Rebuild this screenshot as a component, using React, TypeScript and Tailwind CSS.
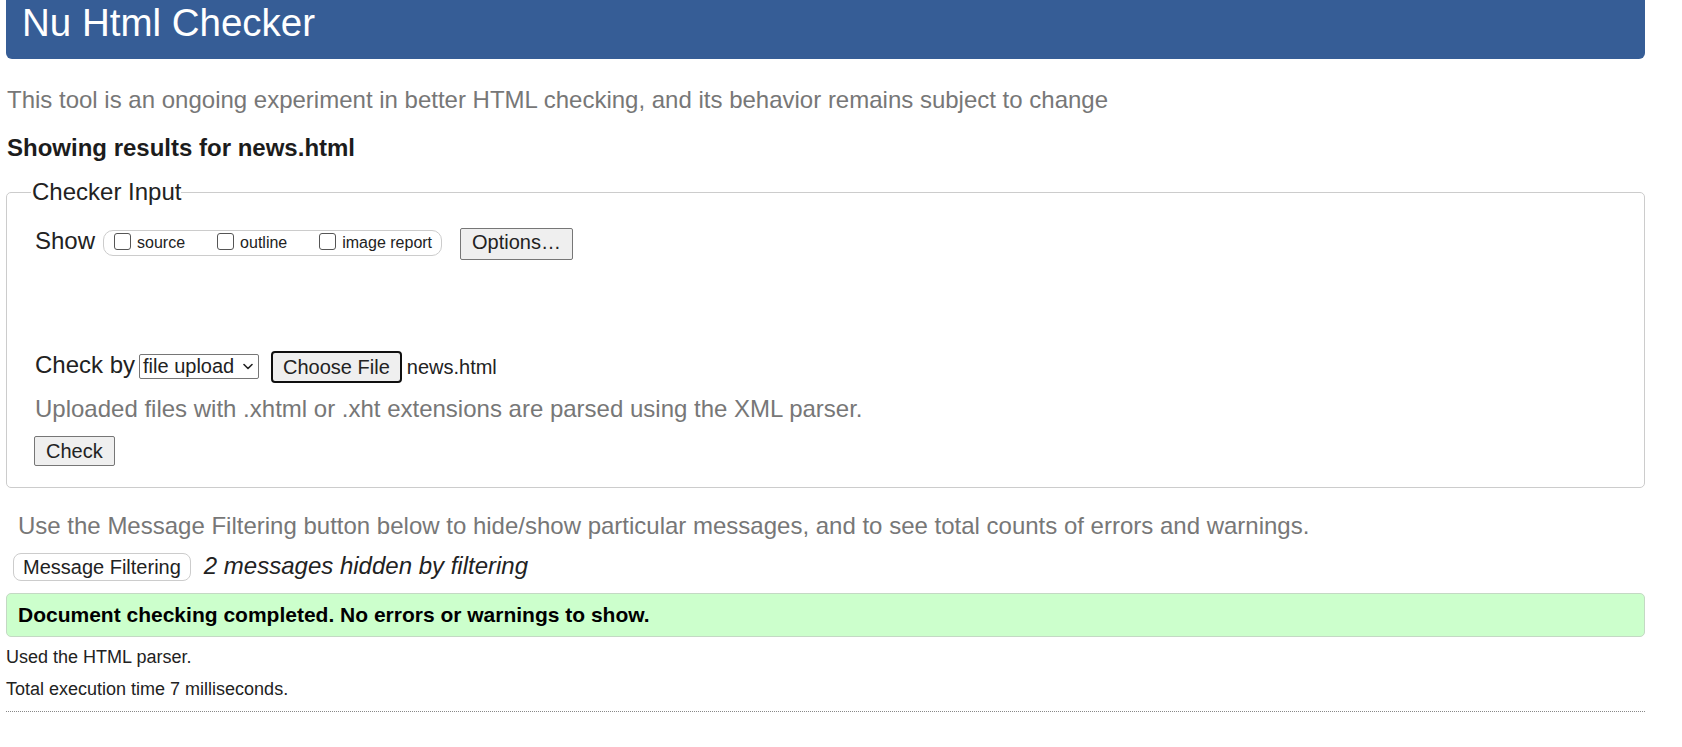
import React from "react";

function Checkbox({ label, first }: { label: string; first?: boolean }) {
  return (
    <div className={`flex items-center ${first ? "" : "ml-[32px]"}`}>
      <span className="mb-[4px] block h-[17px] w-[17px] rounded-[3px] border-[1.5px] border-[#555] bg-white" />
      <span className="ml-[6px] text-[16px] leading-[24px]">{label}</span>
    </div>
  );
}

function App() {
  return (
    <div className="min-h-[747px] bg-white font-['Liberation_Sans',Arial,sans-serif] text-[#222]">
      <div className="ml-[6px] w-[1639px]">
        {/* Titelbalk */}
        <div className="h-[59px] rounded-b-[6px] bg-[#365d96] pl-[16px]">
          <h1 className="pt-[1px] text-[38.5px] leading-[44px] text-white">Nu Html Checker</h1>
        </div>

        <p className="mt-[27px] pl-[1px] text-[24px] leading-[28px] text-[#777]">
          This tool is an ongoing experiment in better HTML checking, and its behavior remains subject to change
        </p>

        <p className="mt-[20px] pl-[1px] text-[24px] font-bold leading-[28px] text-[#1c1c1c]">
          Showing results for news.html
        </p>

        {/* Checker Input */}
        <fieldset className="mt-[16px] rounded-[5px] border border-[#cccccc] pb-[21px] pl-[27px]">
          <legend className="-ml-[3px] pl-[1px] text-[24px] leading-[28px]">Checker Input</legend>

          <div className="mt-[21px] flex items-start">
            <span className="pl-[1px] text-[24px] leading-[28px]">Show</span>
            <div className="ml-[8px] mt-[3px] flex h-[26px] items-center rounded-[10px] border border-[#cccccc] pl-[10px] pr-[9px]">
              <Checkbox label="source" first />
              <Checkbox label="outline" />
              <Checkbox label="image report" />
            </div>
            <button className="ml-[18px] mt-[1px] h-[32px] rounded-[2px] border border-[#767676] bg-[#efefef] px-[11px] pb-[5px] pt-[2px] text-[20px] leading-[23px]">
              Options…
            </button>
          </div>

          <div className="mt-[91px] flex items-start">
            <span className="pl-[1px] text-[24px] leading-[28px]">Check by</span>
            <div className="ml-[4px] mt-[3px] flex h-[25px] w-[120px] items-center justify-between rounded-[2px] border border-[#767676] pl-[3px] pr-[5px]">
              <span className="text-[20px] leading-[23px]">file upload</span>
              <svg width="10" height="7" viewBox="0 0 10 7" fill="none">
                <path d="M1 1.5 L5 5.5 L9 1.5" stroke="#222" strokeWidth="1.6" strokeLinecap="round" strokeLinejoin="round" />
              </svg>
            </div>
            <button className="ml-[12px] h-[32px] rounded-[4px] border-2 border-[#101010] bg-[#efefef] px-[10px] pb-[2px] pt-[3px] text-[20px] leading-[23px]">
              Choose File
            </button>
            <span className="ml-[5px] mt-[5px] text-[20px] leading-[23px]">news.html</span>
          </div>

          <p className="mt-[12px] pl-[1px] text-[24px] leading-[28px] text-[#777]">
            Uploaded files with .xhtml or .xht extensions are parsed using the XML parser.
          </p>

          <button className="mt-[13px] block h-[30px] rounded-[2px] border border-[#767676] bg-[#efefef] px-[11px] pb-[2px] pt-[3px] text-[20px] leading-[23px]">
            Check
          </button>
        </fieldset>

        <p className="mt-[24px] pl-[12px] text-[24px] leading-[28px] text-[#777]">
          Use the Message Filtering button below to hide/show particular messages, and to see total counts of errors and warnings.
        </p>

        <div className="mt-[12px] flex items-start">
          <button className="ml-[7px] mt-[1px] h-[28px] rounded-[8px] border border-[#cccccc] bg-white px-[9px] pb-[1px] pt-[2px] text-[20px] leading-[23px]">
            Message Filtering
          </button>
          <span className="ml-[13px] text-[24px] italic leading-[28px]">2 messages hidden by filtering</span>
        </div>

        {/* Resultaat */}
        <div className="mt-[12px] rounded-[5px] border border-[#c4d9c4] bg-[#ccffcc] py-[8px] pl-[11px] pr-[10px]">
          <p className="text-[21px] font-bold leading-[26px] text-black">
            Document checking completed. No errors or warnings to show.
          </p>
        </div>

        <p className="mt-[4px] text-[18px] leading-[32px]">Used the HTML parser.</p>
        <p className="text-[18px] leading-[32px]">Total execution time 7 milliseconds.</p>

        <hr className="mt-[6px] border-0 border-t border-dotted border-[#888]" />
      </div>
    </div>
  );
}

export default App;
